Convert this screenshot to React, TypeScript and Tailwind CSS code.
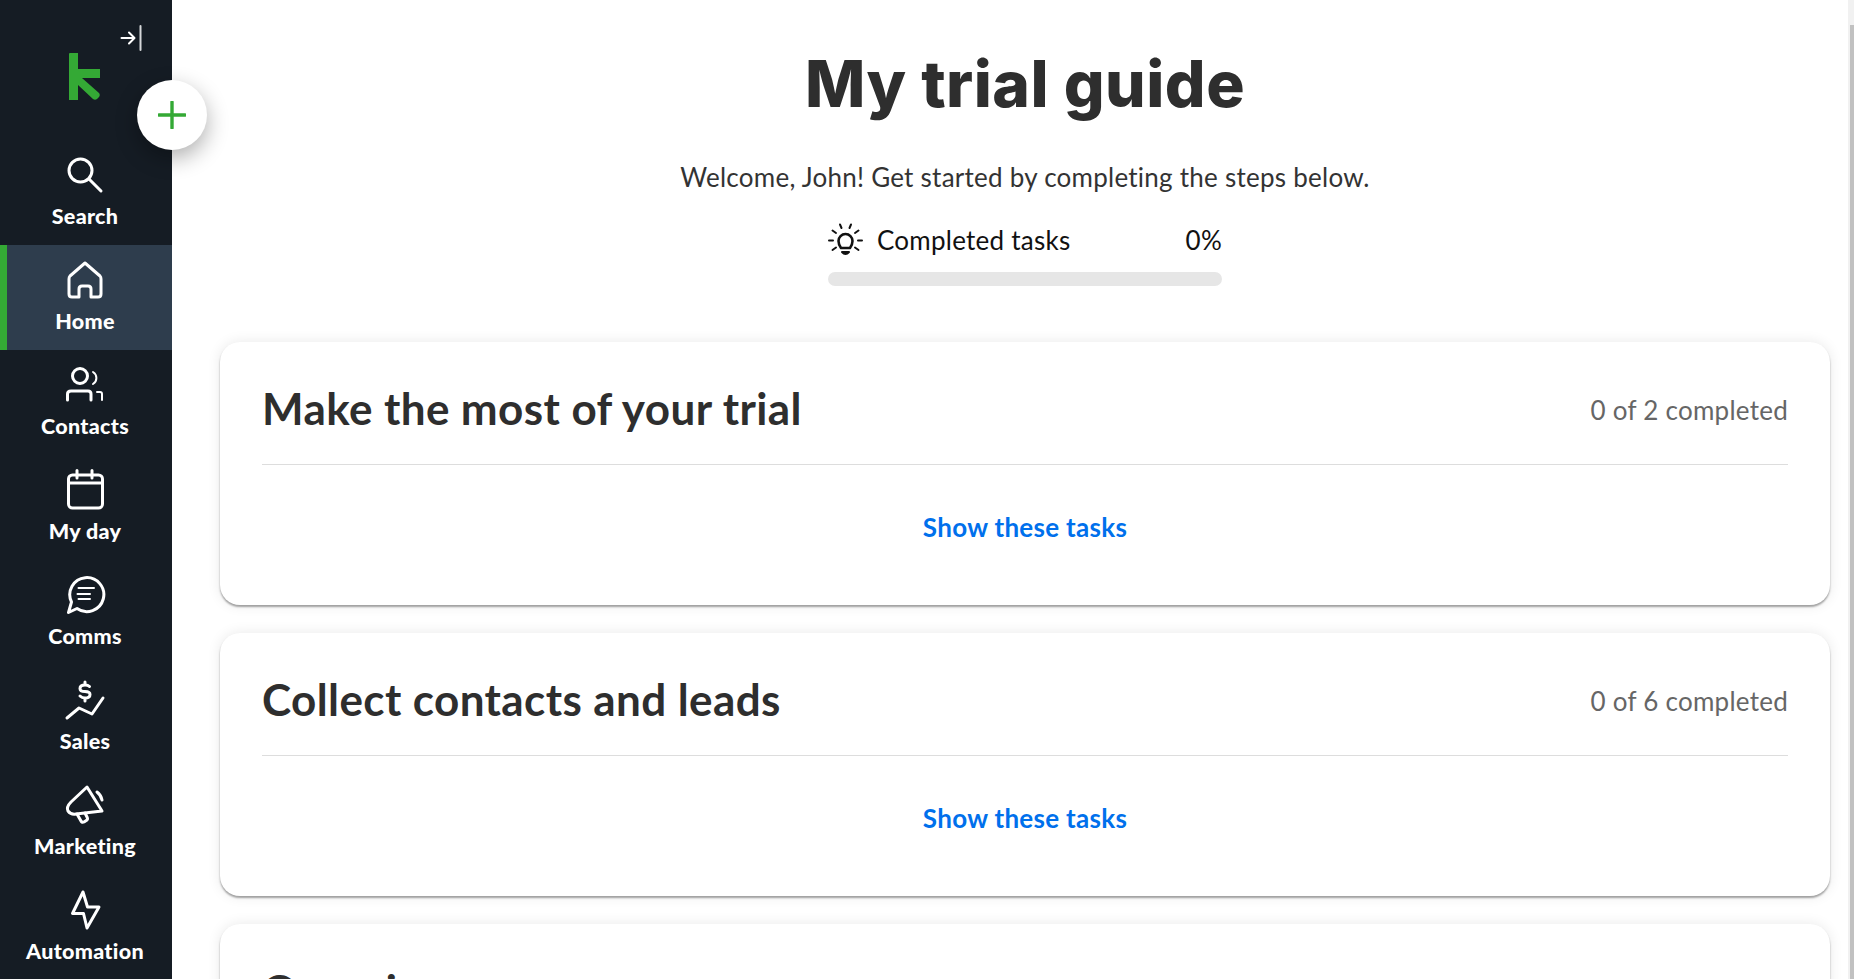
import type { ReactNode } from "react";

const navItems: { label: string; active?: boolean; icon: ReactNode }[] = [
  {
    label: "Search",
    icon: (
      <>
        <circle cx="17.5" cy="18.5" r="11.5" />
        <path d="M26 27 L38 39" />
      </>
    ),
  },
  {
    label: "Home",
    active: true,
    icon: <path d="M22 6 L7 19 Q6 20 6 22 V37 Q6 40 9 40 H16 V32 Q16 29 19 29 H25 Q28 29 28 32 V40 H35 Q38 40 38 37 V22 Q38 20 37 19 Z" />,
  },
  {
    label: "Contacts",
    icon: (
      <>
        <circle cx="17" cy="14" r="7.5" />
        <path d="M4.5 38 V32 Q4.5 29 8 29 H25 Q28 29 28 32 V38" />
        <path d="M30 10 A7 7 0 0 1 30 22" strokeWidth="2" />
        <path d="M34 30 H37 Q39 30 39 32 V38" strokeWidth="2" />
      </>
    ),
  },
  {
    label: "My day",
    icon: (
      <>
        <rect x="5.5" y="8" width="34" height="33" rx="4" />
        <path d="M5.5 16 H39.5 M14 3.5 V11 M29 3.5 V11" />
      </>
    ),
  },
  {
    label: "Comms",
    icon: (
      <>
        <path d="M14 36.5 A17 17 0 1 0 8.5 30 L5.5 40.5 Z" />
        <path d="M15.5 16 H31 M14.5 22 H27 M15.5 27 H27" strokeWidth="2" />
      </>
    ),
  },
  {
    label: "Sales",
    icon: (
      <>
        <path d="M26.5 9.5 Q25 8 22 8 Q17 8 17 11.5 Q17 14.5 22 14.5 Q27 14.5 27 17.5 Q27 21 22 21 Q19 21 17 19 M22 5 V8 M22 21 V24" />
        <path d="M4 41 L16 31 L29 37 L40 21" />
      </>
    ),
  },
  {
    label: "Marketing",
    icon: (
      <>
        <path d="M24 5 L39 29 L13 32 Q8 33 5 29 Q3 25 8 20 Z" />
        <path d="M14 32 L18 39 Q19 41 21 40 L24 38 Q25 37 24 35 L22 31" />
        <path d="M34 10 Q38 13 39 18" />
      </>
    ),
  },
  {
    label: "Automation",
    icon: <path d="M20 5 L9.5 26.5 H20.5 L24 41 L36 20 H24.5 Z" />,
  },
];

const sections = [
  { title: "Make the most of your trial", done: "0 of 2 completed", link: "Show these tasks" },
  { title: "Collect contacts and leads", done: "0 of 6 completed", link: "Show these tasks" },
  { title: "Organize" },
];

function Sidebar() {
  return (
    <aside className="relative z-10 flex h-full w-[172px] shrink-0 flex-col bg-[#151c24]">
      <div className="relative h-[140px] shrink-0 pt-[53px]">
        <svg viewBox="0 0 31 47" className="ml-[69px] h-[47px] w-[31px]" fill="#34a935">
          <path d="M0 1 Q0 0 1 0 H9 V16 H31 V25 H13 L30 40 Q31.5 42 30 44 L28 46 Q26 47.5 24 46 L9 32 V47 H0 Z" />
        </svg>
        <svg viewBox="0 0 22 26" className="absolute left-[120px] top-[25px] h-[26px] w-[22px]" fill="none" stroke="#fff" strokeWidth="2" strokeLinecap="round" strokeLinejoin="round">
          <path d="M1.5 13 H14 M9 7.5 L14.5 13 L9 18.5" />
          <path d="M20.5 1 V25" stroke="#d5d7d9" />
        </svg>
        <button className="absolute left-[137px] top-[80px] flex h-[70px] w-[70px] items-center justify-center rounded-full bg-white shadow-[0_8px_22px_rgba(0,0,0,0.32)]">
          <svg viewBox="0 0 28 28" className="h-[28px] w-[28px]" fill="none" stroke="#34a935" strokeWidth="3.4" strokeLinecap="round">
            <path d="M14 1 V27 M1 14 H27" />
          </svg>
        </button>
      </div>
      {navItems.map((item) => (
        <a
          key={item.label}
          className={`flex h-[105px] shrink-0 flex-col items-center pr-[2px] pt-[12px] ${item.active ? "bg-[#2e3d4d] shadow-[inset_7px_0_0_#34a935]" : ""}`}
        >
          <svg viewBox="0 0 44 44" className="h-[44px] w-[44px]" fill="none" stroke="#fff" strokeWidth="3" strokeLinecap="round" strokeLinejoin="round">
            {item.icon}
          </svg>
          <span className="mt-[7px] text-[21.5px] leading-[26px] font-black tracking-[0.3px] text-white">{item.label}</span>
        </a>
      ))}
    </aside>
  );
}

function Bulb() {
  return (
    <svg viewBox="0 0 35 35" className="h-[35px] w-[35px]" fill="none" stroke="#111" strokeWidth="2" strokeLinecap="round" strokeLinejoin="round">
      <path d="M13 25 Q10.5 21.5 10.5 18 A7 7 0 0 1 24.5 18 Q24.5 21.5 22 25 Z" strokeWidth="2.6" />
      <path d="M14 29 Q17.5 33 21 29 Z" fill="#111" />
      <path d="M12 1.5 L13.5 5 M23 1.5 L21.5 5 M4.5 7.5 L8 10 M30.5 7.5 L27 10 M1 17.5 H5 M30 17.5 H34 M4.5 27 L8 24.5 M30.5 27 L27 24.5" />
    </svg>
  );
}

export default function App() {
  return (
    <div className="flex h-screen w-full overflow-hidden bg-white font-['Lato','Liberation_Sans',sans-serif] text-[#2e2e2e]">
      <Sidebar />
      <main className="min-w-0 flex-1 overflow-hidden pl-[48px] pr-[18px]">
        <div className="flex flex-col items-center">
          <h1 className="mt-[46px] font-['Inter',sans-serif] text-[64px] leading-[76px] font-extrabold tracking-[0.5px]">My trial guide</h1>
          <p className="mt-[38px] text-[26px] leading-[34px] tracking-[0.25px] text-[#333]">Welcome, John! Get started by completing the steps below.</p>
          <div className="mt-[29px] w-[394px]">
            <div className="flex h-[35px] items-center">
              <Bulb />
              <span className="ml-[14px] text-[26px] tracking-[0.25px] text-[#111]">Completed tasks</span>
              <span className="ml-auto text-[26px] tracking-[0.25px] text-[#111]">0%</span>
            </div>
            <div className="mt-[14px] h-[14px] rounded-[7px] bg-[#e6e6e6]" />
          </div>
        </div>
        <div className="mt-[56px] flex flex-col gap-[28px]">
          {sections.map((s) => (
            <section key={s.title} className="h-[263px] shrink-0 rounded-[20px] bg-white px-[42px] shadow-[0_2px_2px_rgba(0,0,0,0.35),0_0_14px_rgba(0,0,0,0.09)]">
              <div className="flex h-[123px] items-center justify-between border-b border-[#ddd] pt-[10px]">
                <h2 className="text-[44px] leading-[52px] font-bold tracking-[0.4px]">{s.title}</h2>
                {s.done && <span className="pt-[4px] text-[26px] tracking-[0.25px] text-[#666]">{s.done}</span>}
              </div>
              {s.link && (
                <div className="pt-[47px] text-center">
                  <a className="text-[26px] leading-[30px] font-bold tracking-[0.3px] text-[#0070ec]">{s.link}</a>
                </div>
              )}
            </section>
          ))}
        </div>
      </main>
      <div className="h-full w-[6px] shrink-0 bg-[#f1f1f1] pl-[2px] pt-[25px]">
        <div className="h-full bg-[#c1c1c1]" />
      </div>
    </div>
  );
}
